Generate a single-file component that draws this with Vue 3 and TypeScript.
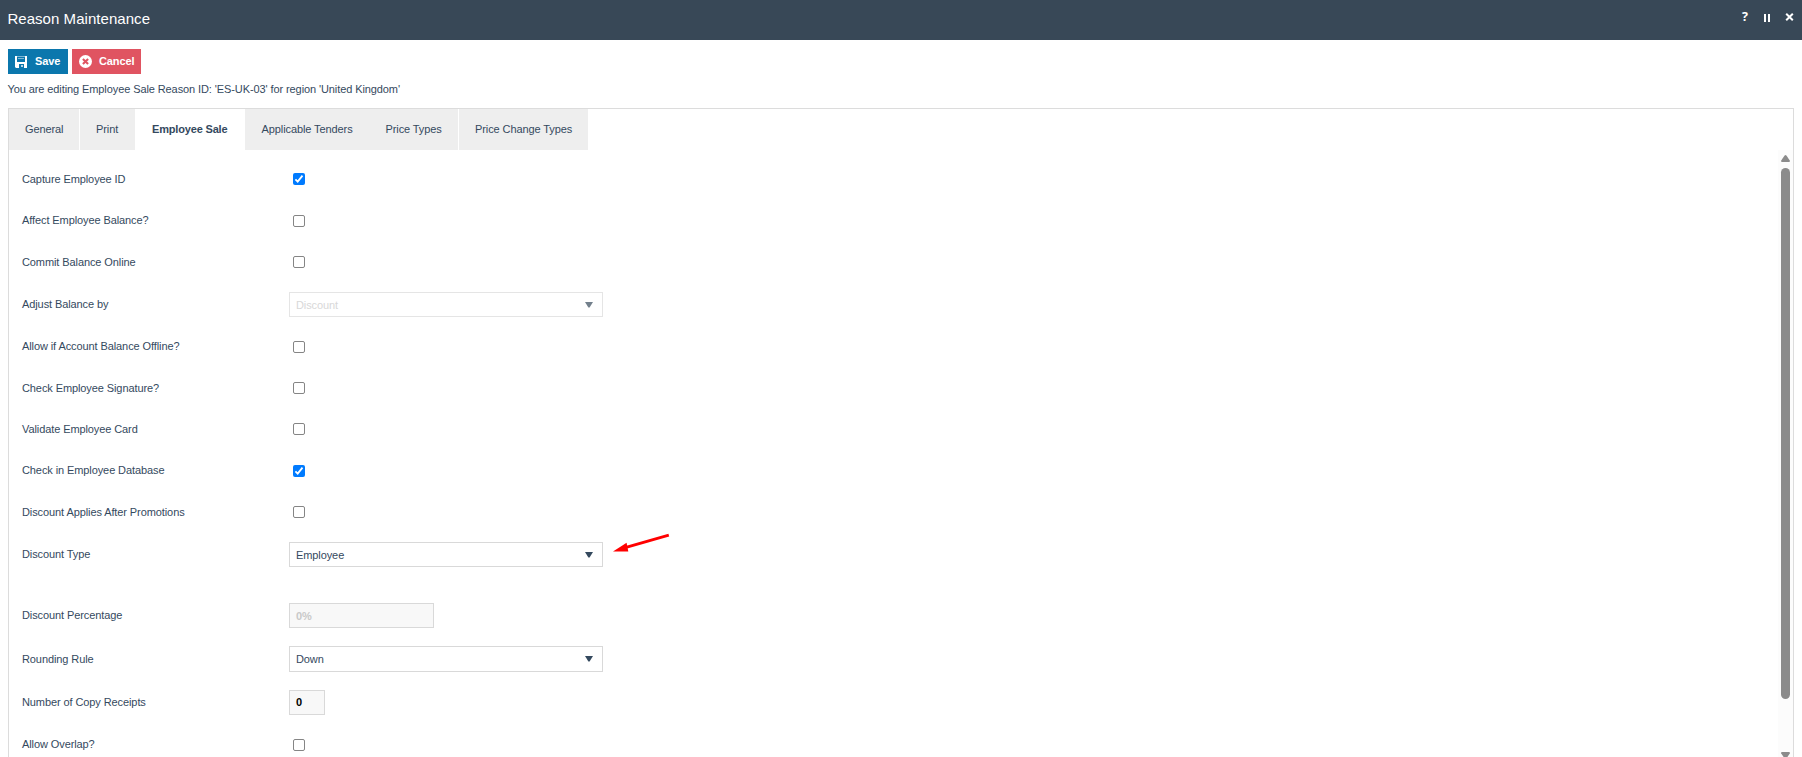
<script setup lang="ts">
import { ref } from 'vue'

type Kind = 'check' | 'select' | 'text'

interface Row {
  label: string
  kind: Kind
  value: boolean | string
  height: number
  nudge: number
  size?: string
  disabled?: boolean
  pointer?: boolean
}

interface Tab {
  name: string
  id: string
}

const tabs: Tab[] = [
  { name: 'General', id: 'general' },
  { name: 'Print', id: 'print' },
  { name: 'Employee Sale', id: 'employee' },
  { name: 'Applicable Tenders', id: 'tenders' },
  { name: 'Price Types', id: 'types' },
  { name: 'Price Change Types', id: 'changes' },
]
const activeTab = ref('employee')

const rows = ref<Row[]>([
  { label: 'Capture Employee ID', kind: 'check', value: true, height: 41, nudge: 6 },
  { label: 'Affect Employee Balance?', kind: 'check', value: false, height: 42, nudge: 7 },
  { label: 'Commit Balance Online', kind: 'check', value: false, height: 42, nudge: 6 },
  { label: 'Adjust Balance by', kind: 'select', value: 'Discount', height: 42, nudge: 0, disabled: true },
  { label: 'Allow if Account Balance Offline?', kind: 'check', value: false, height: 42, nudge: 7 },
  { label: 'Check Employee Signature?', kind: 'check', value: false, height: 41, nudge: 6 },
  { label: 'Validate Employee Card', kind: 'check', value: false, height: 41, nudge: 6 },
  { label: 'Check in Employee Database', kind: 'check', value: true, height: 42, nudge: 7 },
  { label: 'Discount Applies After Promotions', kind: 'check', value: false, height: 42, nudge: 6 },
  { label: 'Discount Type', kind: 'select', value: 'Employee', height: 61, nudge: 0, pointer: true },
  { label: 'Discount Percentage', kind: 'text', value: '0%', height: 44, nudge: 0, disabled: true },
  { label: 'Rounding Rule', kind: 'select', value: 'Down', height: 43, nudge: -1, size: 'tall' },
  { label: 'Number of Copy Receipts', kind: 'text', value: '0', height: 42, nudge: 0, size: 'short' },
  { label: 'Allow Overlap?', kind: 'check', value: false, height: 42, nudge: 7 },
])
</script>

<template>
  <div class="window">
    <header class="titlebar">
      <h1>Reason Maintenance</h1>
      <div class="window-actions">
        <span class="help">?</span>
        <svg class="pause" width="6" height="8" viewBox="0 0 6 8"><path d="M0 0h2v8H0zM4 0h2v8H4z" fill="#fff" /></svg>
        <svg class="close" width="9" height="8" viewBox="0 0 9 8"><path d="M1.2 .7 7.8 7.3M7.8 .7 1.2 7.3" stroke="#fff" stroke-width="2" /></svg>
      </div>
    </header>

    <div class="toolbar">
      <button class="btn save">
        <svg width="12" height="12" viewBox="0 0 12 12">
          <path d="M0 0h12v12H1L0 11z" fill="#fff" />
          <path d="M2 0h8v6H2z" fill="#0b77ad" />
          <path d="M2 .5h8M3 2.5h6" stroke="#7fb8d5" stroke-width="1" />
          <path d="M4 8h5v4H4z" fill="#0b77ad" />
          <path d="M6 9h2v2H6z" fill="#b5d6e6" />
        </svg>
        <span>Save</span>
      </button>
      <button class="btn cancel">
        <svg width="13" height="13" viewBox="0 0 12 12">
          <circle cx="6" cy="6" r="6" fill="#fff" />
          <path d="M3.6 3.6l4.8 4.8M8.4 3.6L3.6 8.4" stroke="#e05461" stroke-width="1.9" />
        </svg>
        <span>Cancel</span>
      </button>
    </div>

    <p class="notice">You are editing Employee Sale Reason ID: 'ES-UK-03' for region 'United Kingdom'</p>

    <main class="box">
      <nav class="tabs">
        <div
          v-for="tab in tabs"
          :key="tab.id"
          class="tab"
          :class="[tab.id, { active: tab.id === activeTab }]"
          @click="activeTab = tab.id"
        >{{ tab.name }}</div>
      </nav>

      <div class="panel">
        <div class="form">
          <div v-for="row in rows" :key="row.label" class="row" :style="{ height: row.height + 'px' }">
            <span class="label">{{ row.label }}</span>
            <div class="control" :style="{ marginTop: row.nudge + 'px' }">
              <span v-if="row.kind === 'check'" class="check" :class="{ on: row.value }" @click="row.value = !row.value">
                <svg v-if="row.value" width="12" height="12" viewBox="0 0 12 12">
                  <path d="M2.4 6.3l2.3 2.3 4.8-6" fill="none" stroke="#fff" stroke-width="1.8" />
                </svg>
              </span>
              <div v-else-if="row.kind === 'select'" class="select" :class="[row.size, { disabled: row.disabled }]">
                <span>{{ row.value }}</span>
                <svg width="8" height="6" viewBox="0 0 8 6"><path d="M0 0h8L4.6 5.4H3.4z" fill="currentColor" /></svg>
              </div>
              <div v-else class="text" :class="[row.size, { disabled: row.disabled }]">{{ row.value }}</div>
              <svg v-if="row.pointer" class="pointer" width="57" height="20" viewBox="0 0 57 20">
                <path d="M55.8 2.2 13 14.4" stroke="#f00" stroke-width="2.8" />
                <path d="M0 18.6 13.6 9.8 15.3 18.6z" fill="#f00" />
              </svg>
            </div>
          </div>
        </div>
        <div class="scrollbar">
          <svg class="up" width="9" height="7" viewBox="0 0 9 7"><path d="M3.6.6Q4.5-.4 5.4.6L8.8 5.6Q9.2 7 8 7H1Q-.2 7 .2 5.6z" fill="#8b8b8b" /></svg>
          <div class="thumb"></div>
          <svg class="down" width="9" height="7" viewBox="0 0 9 7"><path d="M3.6 6.4Q4.5 7.4 5.4 6.4L8.8 1.4Q9.2 0 8 0H1Q-.2 0 .2 1.4z" fill="#8b8b8b" /></svg>
        </div>
      </div>
    </main>
  </div>
</template>

<style>
body {
  background: #fff;
  overflow: hidden;
}
</style>

<style scoped>
.window {
  display: flex;
  flex-direction: column;
  height: 757px;
  overflow: hidden;
  font: 11px/14px "Liberation Sans", Arial, sans-serif;
  letter-spacing: -0.095px;
  color: #34495e;
}
.titlebar {
  display: flex;
  flex: none;
  justify-content: space-between;
  height: 40px;
  background: #384857;
  color: #fff;
}
h1 {
  margin: 0 0 0 7.4px;
  font-size: 15px;
  line-height: 37px;
  font-weight: 400;
  letter-spacing: 0.05px;
}
.window-actions {
  display: flex;
  align-items: flex-start;
  padding: 13px 8px 0 0;
}
.help {
  width: 7px;
  margin: -3px 15px 0 0;
  font: bold 12.5px/14px "Open Sans", sans-serif;
}
.pause { margin: 1px 15px 0 0; }
.toolbar {
  display: flex;
  flex: none;
  gap: 4px;
  padding: 9px 8px 0;
}
.btn {
  display: flex;
  align-items: center;
  height: 25px;
  padding: 0 0 0 7px;
  border: 0;
  color: #fff;
  font: bold 11px/14px "Liberation Sans", Arial, sans-serif;
  letter-spacing: -0.1px;
}
.btn svg { flex: none; }
.btn span { margin: 0 0 2px 8px; }
.save { width: 60px; background: #0b77ad; }
.cancel { width: 69px; background: #e05461; }
.cancel span { margin-left: 7px; }
.notice {
  flex: none;
  margin: 8px 0 0 7.5px;
  height: 26px;
}
.box {
  display: flex;
  flex: 1;
  flex-direction: column;
  min-height: 0;
  margin: 0 8px;
  border: 1px solid #dcdcdc;
  border-bottom: 0;
}
.tabs {
  display: flex;
  flex: none;
  height: 41px;
}
.tab {
  padding-left: 16px;
  box-sizing: border-box;
  line-height: 41px;
  background: #eee;
  white-space: nowrap;
}
.general { width: 70px; margin-right: 1px; }
.print { width: 55px; }
.employee { width: 110px; padding-left: 17px; }
.tenders { width: 124px; padding-left: 16.5px; }
.types { width: 89px; padding-left: 16.5px; margin-right: 1px; }
.changes { width: 129px; }
.active { background: #fff; font-weight: 700; letter-spacing: -0.17px; }
.panel {
  display: flex;
  flex: 1;
  min-height: 0;
}
.form {
  flex: 1;
  padding: 17px 0 0 13px;
}
.row {
  display: flex;
  align-items: flex-start;
}
.label {
  flex: none;
  width: 267px;
  margin-top: 5px;
}
.control {
  display: flex;
}
.check {
  display: block;
  box-sizing: border-box;
  width: 12px;
  height: 12px;
  margin-left: 4px;
  border: 1px solid #858585;
  border-radius: 2px;
}
.check.on {
  border: 0;
  background: #007bff;
}
.check svg { display: block; }
.select,
.text {
  box-sizing: border-box;
  height: 25px;
  padding: 0 9px 0 6px;
  border: 1px solid #d9d9d9;
  line-height: 25px;
}
.select {
  display: flex;
  align-items: flex-start;
  justify-content: space-between;
  width: 314px;
}
.select svg { margin-top: 9px; }
.select.tall { height: 26px; }
.select.disabled { border-color: #e5e5e5; color: #73808c; }
.select.disabled span { color: #d8d8d8; }
.text {
  width: 145px;
  background: #f8f8f8;
  color: #000;
  font-weight: 700;
}
.text.short { width: 36px; line-height: 23px; }
.text.disabled { color: #c9c9c9; }
.pointer {
  flex: none;
  margin: -9px 0 0 10px;
}
.scrollbar {
  display: flex;
  flex: none;
  flex-direction: column;
  align-items: center;
  width: 15px;
  background: #fcfcfc;
}
.up { flex: none; margin-top: 5px; }
.thumb {
  flex: none;
  width: 9px;
  height: 531px;
  margin: 6px 0 53px;
  border-radius: 5px;
  background: #8b8b8b;
}
.down { flex: none; }
</style>
